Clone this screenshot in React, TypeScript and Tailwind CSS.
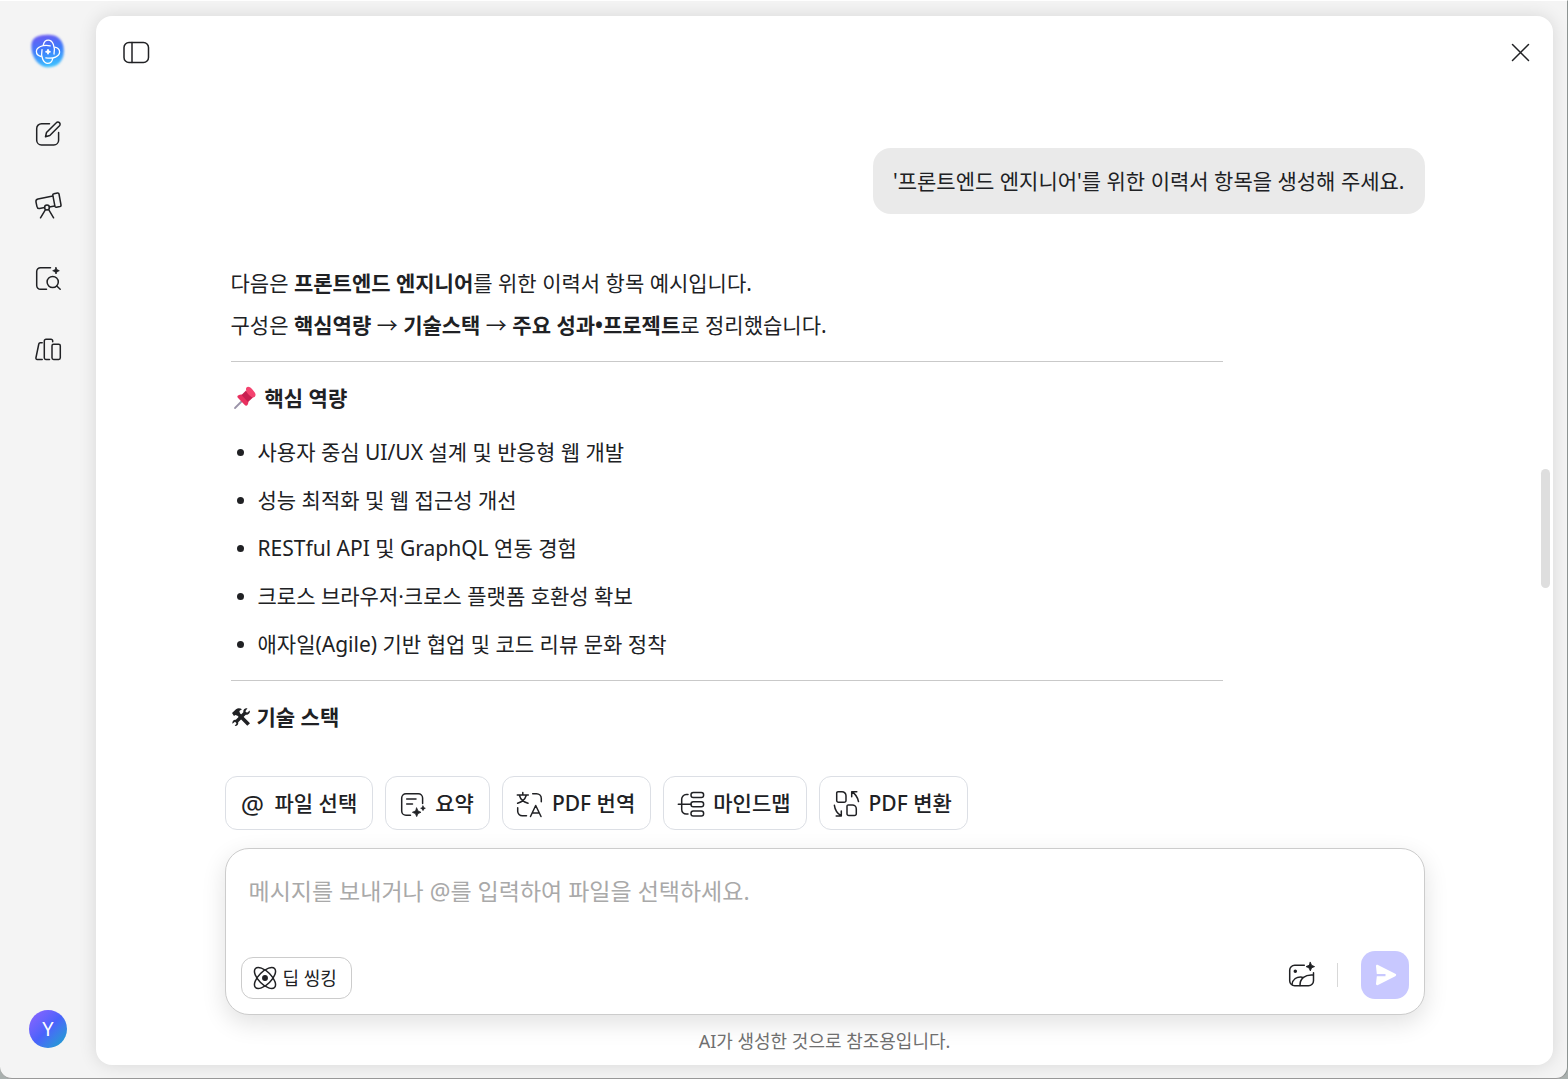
import React, { useState } from 'react'

const coreSkills = [
  '사용자 중심 UI/UX 설계 및 반응형 웹 개발',
  '성능 최적화 및 웹 접근성 개선',
  'RESTful API 및 GraphQL 연동 경험',
  '크로스 브라우저·크로스 플랫폼 호환성 확보',
  '애자일(Agile) 기반 협업 및 코드 리뷰 문화 정착',
]

function Icon({ children }: { children: React.ReactNode }) {
  return (
    <svg width="28" height="28" viewBox="0 0 28 28" fill="none" stroke="currentColor" strokeWidth="1.5" strokeLinecap="round" strokeLinejoin="round" className="shrink-0" aria-hidden="true">
      {children}
    </svg>
  )
}

const petal = 'M15.300 14C16 10.800 17.800 9.200 20.300 9.200 24.500 9.200 27.500 15.500 26 23'

function Logo() {
  return (
    <svg width="40" height="40" viewBox="0 0 40 40" fill="none" aria-hidden="true">
      <defs>
        <linearGradient id="logoFill" x1="0.4" y1="0" x2="0.6" y2="1">
          <stop offset="0" stopColor="#6a5cf2" />
          <stop offset="0.45" stopColor="#3d7bfb" />
          <stop offset="1" stopColor="#3fc4ff" />
        </linearGradient>
        <filter id="logoSoft" x="-20%" y="-20%" width="140%" height="140%">
          <feGaussianBlur stdDeviation="1.3" />
        </filter>
      </defs>
      <path d="M3.500 13C4.500 6 11 4 19.500 3.800 29 3.600 34 8 35.500 16 37.500 28 31 36 20.500 36.300 10 36.500 2.500 25 3.500 13Z" fill="url(#logoFill)" filter="url(#logoSoft)" />
      <g stroke="#fff" strokeWidth="1.300" strokeLinecap="round">
        <path d={petal} />
        <path d={petal} transform="rotate(90 20 20.800)" />
        <path d={petal} transform="rotate(180 20 20.800)" />
        <path d={petal} transform="rotate(270 20 20.800)" />
      </g>
      <path d="M20 19V22.600M18.200 20.800H21.800" stroke="#fff" strokeWidth="1.900" strokeLinecap="round" />
    </svg>
  )
}

function Star({ x, y, r }: { x: number; y: number; r: number }) {
  const k = r * 0.3
  const d = `M${x} ${y - r}L${x + k} ${y - k}L${x + r} ${y}L${x + k} ${y + k}L${x} ${y + r}L${x - k} ${y + k}L${x - r} ${y}L${x - k} ${y - k}Z`
  return <path d={d} fill="currentColor" strokeWidth="0.800" />
}

const navItems = [
  {
    label: '새 채팅',
    icon: (
      <Icon>
        <path d="M15.500 3.700H7.500a4.800 4.800 0 0 0-4.800 4.800V20.200A4.800 4.800 0 0 0 7.500 25H19.800a4.800 4.800 0 0 0 4.800-4.800V12.500" />
        <path d="M11.500 16.700l1-4.200L22.300 2.700a2.100 2.100 0 0 1 3.200 3L15.800 15.500Z" />
      </Icon>
    ),
  },
  {
    label: '탐색',
    icon: (
      <Icon>
        <path d="M18.800 4L4 7.100C2.300 7.500 1.700 8.500 2 10L2.900 14.300C3.200 15.900 4.200 16.600 5.600 16.400L10.600 15.600M15.300 15L20.600 14.100" />
        <path d="M19.900 1.700L23.500 1a1.300 1.300 0 0 1 1.500 1L27 13a1.300 1.300 0 0 1-1 1.500L22.400 15.200a1.300 1.300 0 0 1-1.500-1L18.800 3.200a1.300 1.300 0 0 1 1.100-1.500Z" />
        <circle cx="13" cy="15.500" r="2.400" />
        <path d="M11.500 17.700L6.500 25.800M14.700 17.700L19.600 25.800" />
      </Icon>
    ),
  },
  {
    label: '문서 검색',
    icon: (
      <Icon>
        <path d="M16.500 3.700H6.500a3.800 3.800 0 0 0-3.800 3.800V21.500a3.800 3.800 0 0 0 3.800 3.800H12.500" />
        <circle cx="18.700" cy="18" r="5.600" />
        <path d="M22.800 22L26.200 25.300" />
        <Star x={22} y={6.700} r={3.300} />
      </Icon>
    ),
  },
  {
    label: '라이브러리',
    icon: (
      <Icon>
        <path d="M8.200 6.800H6.300a1.500 1.500 0 0 0-1.500 1.200L1.900 22a1.200 1.200 0 0 0 1.200 1.400H8.200" />
        <path d="M18.700 5.800V5A1.700 1.700 0 0 0 17 3.300H12A1.700 1.700 0 0 0 10.300 5V22A1.500 1.500 0 0 0 11.800 23.400H15.500" />
        <rect x="18" y="8.200" width="8.300" height="15.200" rx="1.600" />
      </Icon>
    ),
  },
]

const quickActions = [
  {
    label: '파일 선택',
    icon: <span className="w-7 text-center text-[26px] leading-7 font-normal" aria-hidden="true">@</span>,
  },
  {
    label: '요약',
    icon: (
      <Icon>
        <path d="M23.600 13.500V8a4.300 4.300 0 0 0-4.300-4.300H7A4.300 4.300 0 0 0 2.700 8V21A4.300 4.300 0 0 0 7 25.300H11.500M7.700 9H17M7.700 14H13.500" />
        <Star x={17.700} y={22.300} r={4.300} />
        <Star x={24} y={18.300} r={2.300} />
      </Icon>
    ),
  },
  {
    label: 'PDF 번역',
    icon: (
      <Icon>
        <path d="M1.300 5H12.300M6.800 2.500V5M3.500 5.500C4.500 9.500 7.500 12 12 13.300M10.200 5.500C9 9.500 6 12 1.600 13.300" />
        <path d="M16.700 3.700H20.500a4.800 4.800 0 0 1 4.800 4.800V11.700M1.700 17.700V21.200A4.600 4.600 0 0 0 6.300 25.800H10.500" />
        <path d="M14.500 26.500L19.700 15.500 25 26.500M16.200 23H23.200" />
      </Icon>
    ),
  },
  {
    label: '마인드맵',
    icon: (
      <Icon>
        <path d="M11 4.600H9.200a4.500 4.500 0 0 0-4.500 4.500V19.500A4.500 4.500 0 0 0 9.200 24H11M1.300 14.300H14" />
        <rect x="14" y="2.500" width="12.600" height="5" rx="2.300" />
        <rect x="14" y="11.800" width="12.600" height="5" rx="2.300" />
        <rect x="14" y="21" width="12.600" height="5" rx="2.300" />
      </Icon>
    ),
  },
  {
    label: 'PDF 변환',
    icon: (
      <Icon>
        <path d="M3.700 3A1.300 1.300 0 0 1 5 1.700H9A4 4 0 0 1 13 5.700V10.500A1.800 1.800 0 0 1 11.200 12.300H5.500A1.800 1.800 0 0 1 3.700 10.500Z" />
        <path d="M14 16.200A1.300 1.300 0 0 1 15.300 14.900H19.300A4 4 0 0 1 23.300 18.900V23.800A1.800 1.800 0 0 1 21.500 25.600H15.800A1.800 1.800 0 0 1 14 23.800Z" />
        <path d="M23.800 1.700H18.700V6.800M18.900 2C22.500 4 24.700 7.500 25.500 11.600" />
        <path d="M3.200 26H8.300V21M8 25.700C4.500 23.500 2 20 1.400 15.300" />
      </Icon>
    ),
  },
]

function Pushpin() {
  return (
    <svg width="28" height="28" viewBox="0 0 28 28" className="shrink-0" role="img" aria-label="📌">
      <path d="M4 24L13 15" stroke="#9a93a8" strokeWidth="1.800" strokeLinecap="round" />
      <path d="M7 11.500C10 9.500 12.500 10.500 14.500 12.300 17 14.500 18.500 18 16.500 21 15.500 22.200 14.500 21.800 13.500 20.800L7.300 14.200C6.300 13.200 6 12.200 7 11.500Z" fill="#e8305f" />
      <path d="M10.500 11L15 6.500 22 13.500 17 18Z" fill="#c81f50" />
      <path d="M15.500 3.500C17 2 19 3 21 5L23 7.500C24.800 9.500 25 11.500 23.800 12.800 22.300 14 20.500 13.500 18 11 15.500 8.500 14.200 5 15.500 3.500Z" fill="#f4436f" />
    </svg>
  )
}

function Tools() {
  return (
    <svg width="20" height="20" viewBox="0 0 20 20" className="shrink-0" fill="currentColor" role="img" aria-label="🛠">
      <path d="M1 6L5 2.200C7 .7 9.500 1.300 11 2.300L8.300 4 9 6.300 19 16.300 16.300 18.800 6.500 8.700 4.300 8 3 9Z" />
      <path d="M18.800 3.500L16 5.700 14.300 4.200 16.500 1.300C14 .8 12 2.500 12.300 5.200L4.800 12.800C2.500 12.500 1 14.300 1.400 16.700L4 14.800 5.500 16.300 3.700 19C6 19.300 7.700 17.500 7.200 15.200L14.800 7.800C17.500 8 19.300 6 18.800 3.500Z" />
    </svg>
  )
}

export default function App() {
  const [message, setMessage] = useState('')

  return (
    <div className="h-screen bg-[#a9b0ae] font-['Noto_Sans','Noto_Sans_CJK_KR',sans-serif] text-[#202124]">
      <div className="flex h-full rounded-b-xl border-t border-r border-b border-t-white border-r-[#8d9492] border-b-[#999999] bg-[#f4f4f4] pt-[15px] pr-3.5 pb-[13px]">
        {/* Sidebar */}
        <aside className="flex w-24 shrink-0 flex-col items-center justify-between pt-[15px] pb-[17px]">
          <div className="flex flex-col items-center gap-[49px]">
            <a href="#" aria-label="홈"><Logo /></a>
            <nav className="flex flex-col gap-11">
              {navItems.map((item) => (
                <button key={item.label} aria-label={item.label} className="block cursor-pointer">
                  {item.icon}
                </button>
              ))}
            </nav>
          </div>
          <button className="size-[38px] rounded-full bg-linear-135 from-[#8f63ff] via-[#4a62fb] to-[#00a5c8] text-xl text-white">Y</button>
        </aside>

        <main className="relative flex min-w-0 flex-1 flex-col rounded-2xl bg-white shadow-[0_0_18px_rgba(0,0,0,0.12)]">
          <header className="flex h-[72px] shrink-0 items-center justify-between pr-[18px] pl-[26px]">
            <button aria-label="사이드바 열기">
              <Icon>
                <rect x="2" y="4.500" width="24.500" height="20" rx="5" />
                <path d="M10 4.500V24.500" />
              </Icon>
            </button>
            <button aria-label="닫기">
              <Icon>
                <path d="M5.500 6.500L21.500 22.500M21.500 6.500L5.500 22.500" />
              </Icon>
            </button>
          </header>

          {/* Conversation */}
          <section className="min-h-0 flex-1 overflow-hidden px-8">
            <div className="mx-auto max-w-[1200px] pt-[60px]">
              <div className="flex justify-end">
                <p className="rounded-[18px] bg-[#eaeaea] px-5 py-3 text-[21px] leading-[42px]">
                  '프론트엔드 엔지니어'를 위한 이력서 항목을 생성해 주세요.
                </p>
              </div>

              <article className="mt-12 ml-1.5 max-w-[992px] text-[21px]">
                <p className="leading-[42px]">
                  다음은 <strong>프론트엔드 엔지니어</strong>를 위한 이력서 항목 예시입니다.
                  <br />
                  구성은 <strong>핵심역량</strong> → <strong>기술스택</strong> → <strong>주요 성과•프로젝트</strong>로 정리했습니다.
                </p>
                <hr className="mt-[15px] border-[#c9c9c9]" />
                <h3 className="mt-[15px] flex items-center gap-1.5 leading-[42px] font-bold">
                  <Pushpin />
                  핵심 역량
                </h3>
                <ul className="mt-[9px] leading-[48px]">
                  {coreSkills.map((skill) => (
                    <li key={skill} className="flex items-center gap-3.5 pl-1.5">
                      <span className="size-[7px] rounded-full bg-[#202124]" />
                      {skill}
                    </li>
                  ))}
                </ul>
                <hr className="mt-3 border-[#c9c9c9]" />
                <h3 className="mt-[15px] flex items-center gap-1.5 leading-[42px] font-bold">
                  <Tools />
                  기술 스택
                </h3>
              </article>
            </div>
          </section>

          {/* Composer */}
          <div className="shrink-0 px-8">
            <div className="mx-auto max-w-[1200px]">
              <div className="flex flex-wrap gap-3">
                {quickActions.map((action) => (
                  <button key={action.label} className="flex h-[54px] items-center gap-2 rounded-xl border border-[#dcdfe5] bg-white pt-0.5 pr-[15px] pl-[13px] text-[21px] font-medium whitespace-nowrap">
                    {action.icon}
                    {action.label}
                  </button>
                ))}
              </div>

              <form onSubmit={(e) => e.preventDefault()} className="mt-[18px] flex h-[167px] flex-col justify-between rounded-3xl border border-[#cccccc] bg-white p-[15px] pt-5 shadow-[0_8px_24px_rgba(0,0,0,0.12)]">
                <textarea
                  value={message}
                  onChange={(e) => setMessage(e.target.value)}
                  aria-label="메시지"
                  rows={1}
                  placeholder="메시지를 보내거나 @를 입력하여 파일을 선택하세요."
                  className="w-full resize-none px-2 text-[23px] leading-[44px] outline-none placeholder:text-[#a9a9a9]"
                />
                <div className="flex items-end justify-between">
                  <button type="button" className="flex h-[42px] items-center gap-1 rounded-xl border border-[#cccccc] pr-3.5 pl-[9px] text-lg">
                    <Icon>
                      <ellipse cx="14" cy="14" rx="13.500" ry="6.300" transform="rotate(45 14 14)" />
                      <ellipse cx="14" cy="14" rx="13.500" ry="6.300" transform="rotate(-45 14 14)" />
                      <circle cx="14" cy="14" r="2.200" fill="currentColor" />
                    </Icon>
                    딥 씽킹
                  </button>
                  <div className="flex items-center">
                    <button type="button" aria-label="이미지 생성">
                      <Icon>
                        <path d="M16.300 4.300H6.700a5 5 0 0 0-5 5V19.700a5 5 0 0 0 5 5H20.500a5 5 0 0 0 5-5V11.800" />
                        <path d="M4 23.500C4.700 18.500 8.500 15.500 14.200 16.200M12 24.500C11.800 17.500 17 13.200 25.300 14" />
                        <circle cx="7.300" cy="10.200" r="1" fill="currentColor" />
                        <Star x={22.300} y={5.600} r={4.300} />
                      </Icon>
                    </button>
                    <span className="mr-[23px] ml-[21px] h-6 w-px bg-[#d8d8d8]" />
                    <button type="submit" aria-label="보내기" className="flex size-12 items-center justify-center rounded-[14px] bg-[#c8c8ff]">
                      <svg width="24" height="24" viewBox="0 0 24 24" aria-hidden="true">
                        <path d="M3 3.200C2.900 2 4 1.600 5 2L22.300 10.800C23.500 11.400 23.500 12.600 22.300 13.200L5 22C4 22.500 2.900 22 3 20.800L3.800 13.300H12.500V10.900H3.800Z" fill="#fff" />
                      </svg>
                    </button>
                  </div>
                </div>
              </form>
              <p className="pt-2.5 pb-2 text-center text-lg leading-8 text-[#6f6f6f]">AI가 생성한 것으로 참조용입니다.</p>
            </div>
          </div>

          <div className="absolute top-[453px] right-[3px] h-[119px] w-[9px] rounded-full bg-[#dedede]" />
        </main>
      </div>
    </div>
  )
}
